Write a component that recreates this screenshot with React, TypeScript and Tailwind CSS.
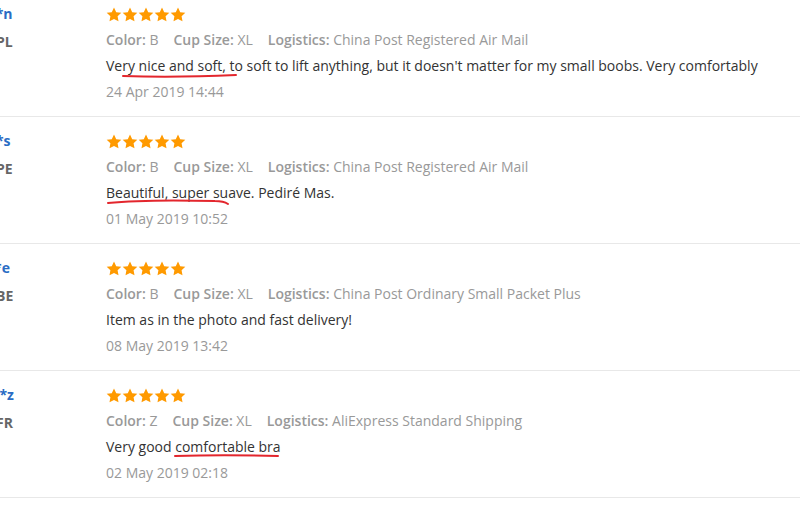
import React from "react";

type Review = {
  name: string;
  country: string;
  color: string;
  shipping: string;
  text: React.ReactNode;
  date: string;
};

const Star = () => (
  <svg width="16" height="15" viewBox="0 0 24 23" className="block">
    <path
      d="M12 0.8l3.4 7.1 7.8 1-5.7 5.4 1.4 7.7L12 18.3 5.1 22l1.4-7.7L0.8 8.9l7.8-1z"
      fill="#ff9a00"
    />
  </svg>
);

// hand-drawn red marker strokes over the review text
const Scribble = ({ d, w, left, top }: { d: string; w: number; left: number; top: number }) => (
  <svg
    width={w}
    height="10"
    viewBox={`0 0 ${w} 10`}
    className="absolute pointer-events-none"
    style={{ left, top }}
  >
    <path d={d} stroke="#e3262d" strokeWidth="2" fill="none" strokeLinecap="round" />
  </svg>
);

const reviews: Review[] = [
  {
    name: "B***n",
    country: "PL",
    color: "B",
    shipping: "China Post Registered Air Mail",
    text: (
      <span className="relative">
        Very nice and soft, to soft to lift anything, but it doesn't matter for my small boobs. Very comfortably
        <Scribble w={116} left={16} top={16} d="M1 4 C 30 5, 70 5, 114 3" />
      </span>
    ),
    date: "24 Apr 2019 14:44",
  },
  {
    name: "A***s",
    country: "PE",
    color: "B",
    shipping: "China Post Registered Air Mail",
    text: (
      <span className="relative">
        Beautiful, super suave. Pediré Mas.
        <Scribble w={124} left={1} top={14} d="M1 6 C 30 3, 70 3, 108 4 C 114 4, 118 5, 121 7" />
      </span>
    ),
    date: "01 May 2019 10:52",
  },
  {
    name: "E***e",
    country: "BE",
    color: "B",
    shipping: "China Post Ordinary Small Packet Plus",
    text: <span>Item as in the photo and fast delivery!</span>,
    date: "08 May 2019 13:42",
  },
  {
    name: "M***z",
    country: "FR",
    color: "Z",
    shipping: "AliExpress Standard Shipping",
    text: (
      <span className="relative">
        Very good comfortable bra
        <Scribble w={106} left={68} top={15} d="M1 4 C 30 3, 70 3, 104 4" />
      </span>
    ),
    date: "02 May 2019 02:18",
  },
];

export default function App() {
  return (
    <div
      className="w-[800px] h-[512px] overflow-hidden bg-white text-[14px]"
      style={{ fontFamily: '"Open Sans", "Liberation Sans", sans-serif' }}
    >
      <div className="-mt-[10px]">
        {reviews.map((r) => (
          <div key={r.date} className="flex border-b border-[#e8e8e8]">
            {/* buyer column */}
            <div className="w-[134px] -ml-[29px] shrink-0 pt-[14px]">
              <div className="leading-[20px] font-bold text-[#2a6cc4]">{r.name}</div>
              <div className="mt-[8px] flex items-center gap-[3px] leading-[20px] font-bold text-[#666]">
                <span className="w-[22px] h-[14px] bg-[#d9d9d9]" />
                {r.country}
              </div>
            </div>

            {/* feedback column */}
            <div className="flex-1 pt-[16px] pb-[11px] pl-px">
              <div className="flex h-[16px] items-center">
                {[0, 1, 2, 3, 4].map((i) => (
                  <Star key={i} />
                ))}
              </div>
              <div className="mt-[5px] flex gap-[15px] leading-[26px] text-[#999]">
                <span>
                  <b className="font-semibold">Color:</b> {r.color}
                </span>
                <span>
                  <b className="font-semibold">Cup Size:</b> XL
                </span>
                <span>
                  <b className="font-semibold">Logistics:</b> {r.shipping}
                </span>
              </div>
              <div className="leading-[26px] text-[#333]">{r.text}</div>
              <div className="leading-[26px] text-[#999]">{r.date}</div>
            </div>
          </div>
        ))}
      </div>
    </div>
  );
}
